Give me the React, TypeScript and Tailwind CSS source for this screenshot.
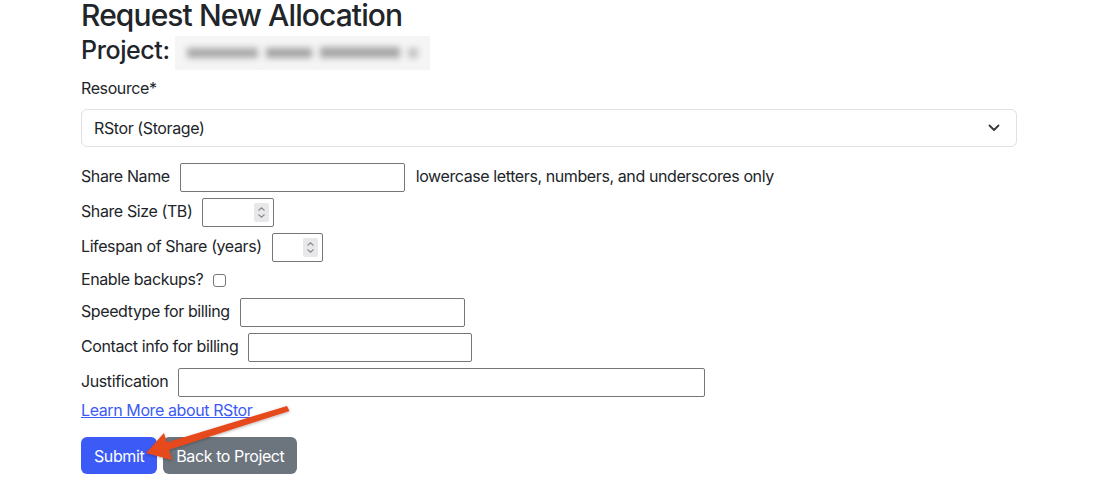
import React from "react";

const font = { fontFamily: "Inter, 'Liberation Sans', sans-serif" };

function TextInput({ w }: { w: string }) {
  return (
    <input
      type="text"
      className={`${w} h-[29px] border border-[#767676] rounded-[2px] bg-white px-1 outline-none`}
    />
  );
}

function NumberInput({ w }: { w: string }) {
  return (
    <div className={`${w} h-[29px] border border-[#767676] rounded-[2px] bg-white flex items-center justify-end pr-[4px]`}>
      <div className="w-[15px] h-[19px] bg-[#e8e8ea] rounded-[2px] flex items-center justify-center">
        <svg width="9" height="13" viewBox="0 0 9 13" fill="none" stroke="#8a8a8e" strokeWidth="1.1">
          <path d="M1.5 4.5 L4.5 1.8 L7.5 4.5" />
          <path d="M1.5 8.5 L4.5 11.2 L7.5 8.5" />
        </svg>
      </div>
    </div>
  );
}

export default function App() {
  return (
    <div className="relative w-[1096px] h-[482px] overflow-hidden bg-white text-[#212529] text-[16px] tracking-[-0.025em]" style={font}>
      <div className="pl-[81px] pr-[80px]">
        <h2 className="text-[30px] leading-[30px] font-medium tracking-[-0.03em]">Request New Allocation</h2>
        <div className="flex items-center h-[36px] mt-[2px]">
          <h3 className="text-[25px] leading-[30px] font-medium">Project:</h3>
          <div className="ml-[5px] mt-[5px] w-[255px] h-[34px] bg-[#f5f5f5] flex items-center px-[12px] gap-[8px] overflow-hidden">
            <div className="w-[72px] h-[10px] bg-[#a9a9a9] blur-[3px]" />
            <div className="w-[46px] h-[10px] bg-[#a4a4a4] blur-[3px]" />
            <div className="w-[80px] h-[11px] bg-[#a7a7a7] blur-[3px]" />
            <div className="w-[10px] h-[10px] bg-[#c2c2c2] blur-[3px]" />
          </div>
        </div>
        <div className="mt-[8px] h-[24px] leading-[24px]">Resource*</div>
        <div className="mt-[9px] h-[38px] border border-[#dee2e6] rounded-[6px] flex items-center justify-between pl-[12px] pr-[16px] w-[936px]">
          <span>RStor (Storage)</span>
          <svg width="12" height="8" viewBox="0 0 12 8" fill="none" stroke="#343a40" strokeWidth="1.8" strokeLinecap="round" strokeLinejoin="round">
            <path d="M1.5 1.5 L6 6 L10.5 1.5" />
          </svg>
        </div>

        <div className="mt-[13px] flex items-center h-[35px]">
          <label className="mr-[10px] mb-[4px]">Share Name</label>
          <TextInput w="w-[225px]" />
          <span className="ml-[11px] mb-[4px]">lowercase letters, numbers, and underscores only</span>
        </div>
        <div className="flex items-center h-[35px]">
          <label className="mr-[10px] mb-[4px]">Share Size (TB)</label>
          <NumberInput w="w-[72px]" />
        </div>
        <div className="flex items-center h-[35px]">
          <label className="mr-[10px] mb-[4px]">Lifespan of Share (years)</label>
          <NumberInput w="w-[51px]" />
        </div>
        <div className="flex items-center h-[30px]">
          <label className="mr-[10px] mb-[2px]">Enable backups?</label>
          <span className="w-[13px] h-[13px] border border-[#767676] rounded-[3px] bg-white" />
        </div>
        <div className="flex items-center h-[35px]">
          <label className="mr-[10px] mb-[4px]">Speedtype for billing</label>
          <TextInput w="w-[225px]" />
        </div>
        <div className="flex items-center h-[35px]">
          <label className="mr-[10px] mb-[4px]">Contact info for billing</label>
          <TextInput w="w-[224px]" />
        </div>
        <div className="flex items-center h-[35px]">
          <label className="mr-[10px] mb-[4px]">Justification</label>
          <TextInput w="w-[527px]" />
        </div>
        <div className="h-[20px] leading-[20px]">
          <a href="#" className="text-[#3c5bf6] underline">Learn More about RStor</a>
        </div>
        <div className="mt-[17px] flex gap-[6px]">
          <button className="h-[37px] px-[13px] rounded-[6px] bg-[#3c5bf6] text-white">Submit</button>
          <button className="h-[37px] px-[13px] rounded-[6px] bg-[#6c757d] text-white">Back to Project</button>
        </div>
      </div>

      <svg className="absolute left-0 top-0 pointer-events-none" width="1096" height="482" viewBox="0 0 1096 482">
        <defs>
          <filter id="sh" x="-20%" y="-20%" width="140%" height="140%">
            <feDropShadow dx="0" dy="1" stdDeviation="1.5" floodColor="#000" floodOpacity="0.3" />
          </filter>
        </defs>
        <g filter="url(#sh)" fill="#e5491d">
          <path d="M287 406 L289.5 411 L168 450 L165 443 Z" />
          <path d="M146 453 L164 433 L172 460 Z" />
        </g>
      </svg>
    </div>
  );
}
